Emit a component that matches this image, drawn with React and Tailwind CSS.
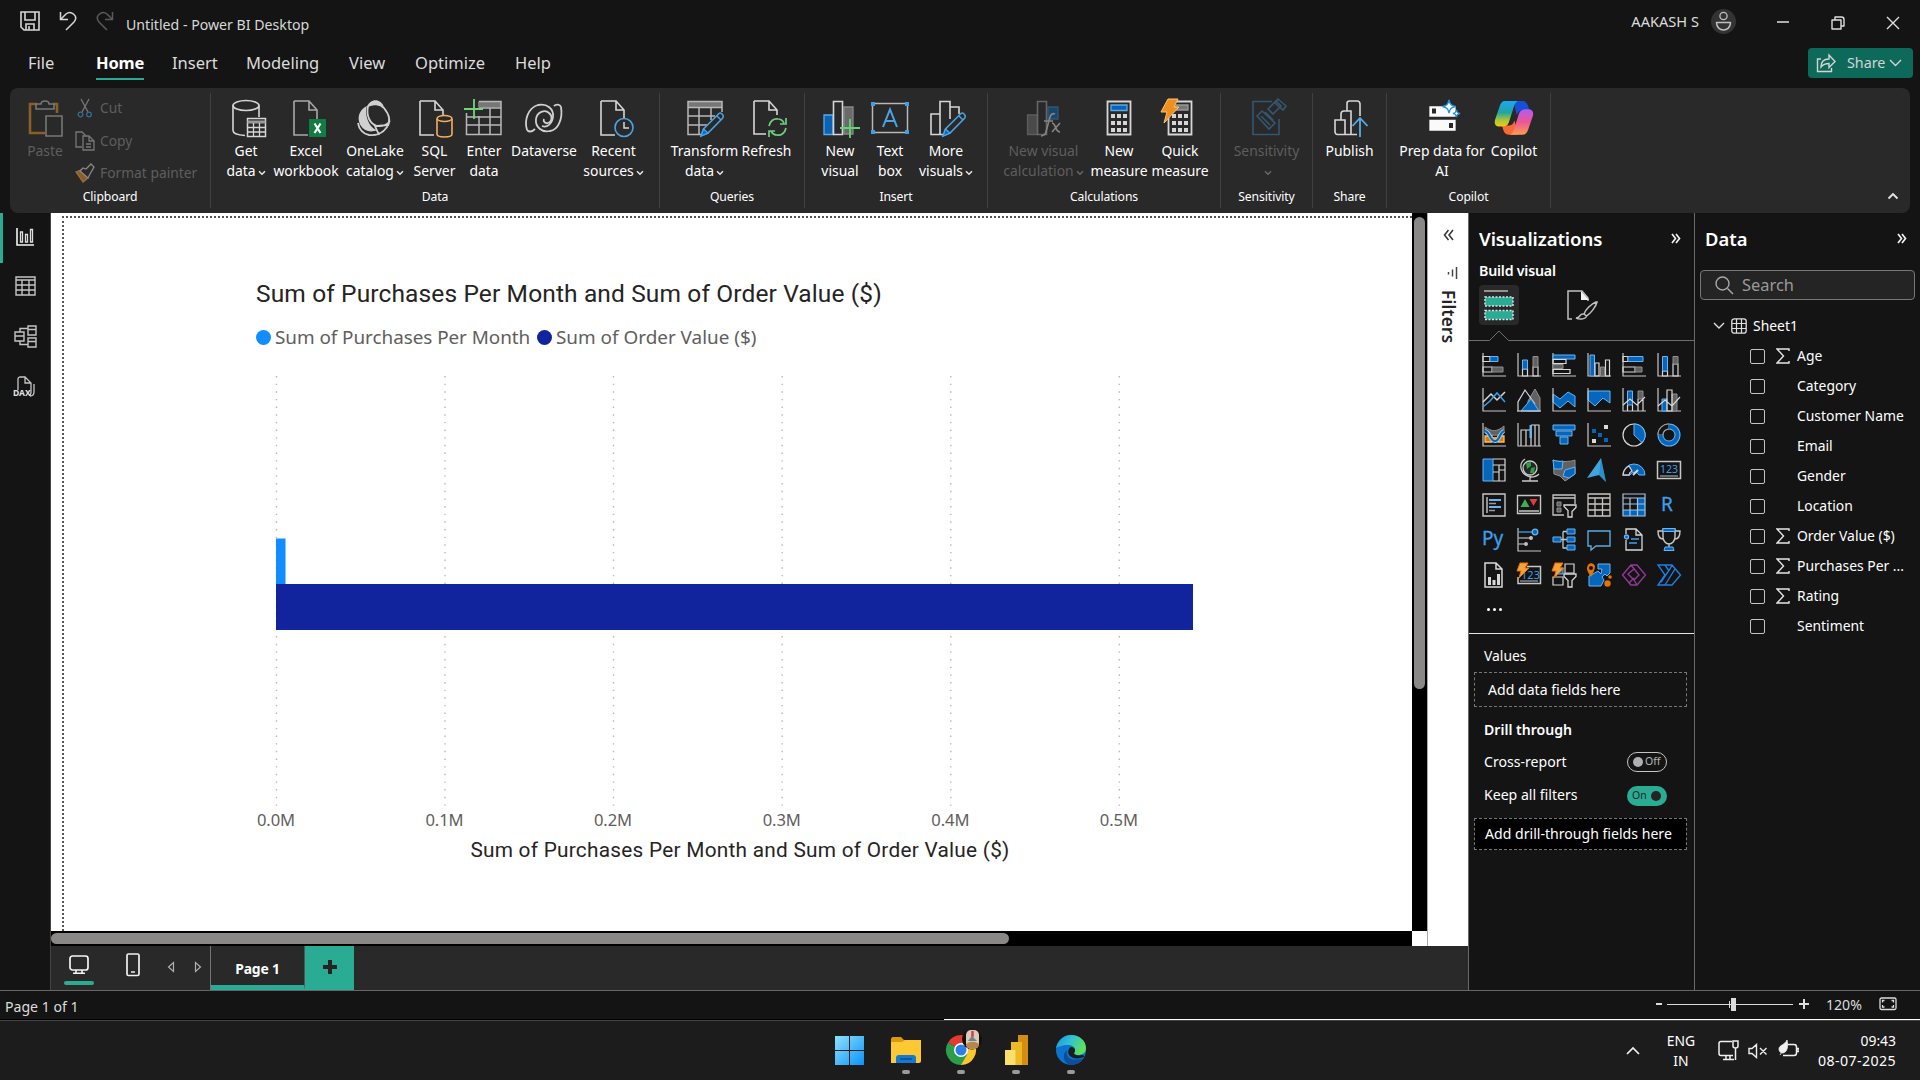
import React from "react";

const BLUE = "#0467bd";
const SKY = "#6cb2ee";
const G = "#c8c6c4";
const D = "#616161";

/* ---------- shared small pieces ---------- */

const Svg = ({ w = 24, h = w, vb, className = "", children }) => (
  <svg
    width={w}
    height={h}
    viewBox={vb || `0 0 ${w} ${h}`}
    fill="none"
    stroke={G}
    strokeWidth="1.3"
    className={`block shrink-0 ${className}`}
  >
    {children}
  </svg>
);

const Caret = ({ dim }) => (
  <svg width="8" height="6" viewBox="0 0 8 6" fill="none" stroke={dim ? "#6a6a6a" : "#e8e8e8"} strokeWidth="1.5" className="mt-1 ml-0.5 inline-block shrink-0">
    <path d="M1 1.2l3 3 3-3" />
  </svg>
);

const Doc = ({ c = "#d6d6d6" }) => (
  <path d="M5 2h15l8 9v9M5 2v34h14M20 2v9h8" stroke={c} strokeWidth="1.6" />
);

const Pencil = ({ x = 0, y = 0 }) => (
  <g transform={`translate(${x} ${y})`}>
    <path d="M2 24l2.500-7L20 1.500c1.500-1.500 5.500 1.500 3.800 4.500L9 21z" fill="#292929" stroke="#4da3e2" strokeWidth="1.5" />
    <path d="M2 24l2.500-7 4.500 4z" fill="#0a6cc4" stroke="#4da3e2" />
    <path d="M18 4l4 4" stroke="#4da3e2" strokeWidth="1.4" />
  </g>
);

/* ---------- ribbon icons, 38 x 38 ---------- */

const ribbonIcons = {
  getData: (
    <>
      <ellipse cx="16" cy="6.500" rx="13" ry="5" stroke="#d6d6d6" strokeWidth="1.6" />
      <path d="M3 6.500v25c0 2.500 5 4.500 12 5M29 6.500V18" stroke="#d6d6d6" strokeWidth="1.6" />
      <rect x="17.500" y="19.500" width="18" height="18" fill="#292929" stroke="#d6d6d6" strokeWidth="1.5" />
      <path d="M17.500 23h18" stroke="#9a9a9a" strokeWidth="3" />
      <path d="M17.500 28.500h18M17.500 33h18M23.500 24v13M29.500 24v13" stroke="#d6d6d6" strokeWidth="1.3" />
    </>
  ),
  excel: (
    <>
      <Doc c="#a8a8a8" />
      <rect x="20" y="20" width="17" height="18" fill="#107c41" stroke="none" />
      <path d="M25.500 24.500l6 9.500M31.500 24.500l-6 9.500" stroke="#fff" strokeWidth="2.200" />
    </>
  ),
  oneLake: (
    <>
      <path d="M5 27C-1 17 6 9 11 7c-3 8 2 22 10 24-6 3-13 1-16-4z" fill="#d0d0d0" stroke="none" />
      <path d="M11 8c3-9 14-9 17 0-6-3-11-3-17 0z" fill="#d0d0d0" stroke="none" />
      <path d="M12 7c5-3 12-2 16 2 4 5 8 12 3 19-4 6-11 9-18 8-6-1-10-6-11-12M12 7c-2 10 2 18 9 20 6 1 11-2 13-5M23 36l-4-9 14-1" stroke="#d0d0d0" strokeWidth="1.8" />
    </>
  ),
  sql: (
    <>
      <path d="M5 2h15l8 9v6M5 2v34h14M20 2v9h8" stroke="#d6d6d6" strokeWidth="1.6" transform="translate(-1 0)" />
      <path d="M21 20v15c0 4 15 4 15 0V20" fill="#292929" stroke="#f0b060" strokeWidth="1.6" />
      <ellipse cx="28.500" cy="19.500" rx="7.500" ry="3" fill="#292929" stroke="#f0b060" strokeWidth="1.6" />
    </>
  ),
  enter: (
    <>
      <path d="M13 2.500h23v6H13z" fill="#777" stroke="none" />
      <path d="M1.500 14v21.500H36V2.500H14M1.500 26h34.500M1.500 18h34.500M14 17v18.500M25 9v26.500M14 9h22" stroke="#b8b8b8" strokeWidth="1.5" />
      <path d="M9 0v20M-1 10h19" stroke="#6fd67c" strokeWidth="1.8" />
    </>
  ),
  dataverse: (
    <g stroke="#d0d0d0" strokeWidth="1.8">
      <path d="M36 8c2 12-3 23-11 24-8 2-15-4-14-12 1-7 9-10 13-6 4 3 3 9-1 10-3 1-5-2-4-4" />
      <path d="M2 31C-1 21 3 9 13 6c9-2 16 4 15 12-1 7-6 11-11 9" />
      <path d="M36 8c-1-3-5-3-7-1M2 31c2 2 5 2 8-1" />
    </g>
  ),
  recent: (
    <>
      <Doc />
      <circle cx="28" cy="28.500" r="9" fill="#292929" stroke="#4da3e2" strokeWidth="1.6" />
      <path d="M28 23v6h5" stroke="#d6d6d6" strokeWidth="1.5" />
    </>
  ),
  transform: (
    <>
      <path d="M1 3h34v5H1z" fill="#777" stroke="none" />
      <path d="M35 13V2.500H1v33h15M1 8.500h34M1 17h27M1 26h19M12 9v26M24 9v12" stroke="#b8b8b8" strokeWidth="1.5" />
      <Pencil x="12" y="13" />
    </>
  ),
  refresh: (
    <>
      <path d="M5 2h15l8 9v5M5 2v33h12M20 2v9h8" stroke="#d6d6d6" strokeWidth="1.6" />
      <path d="M20 27c1-5 5-8 9-7 3 0 5 2 6 4M37 19v6h-6M37 29c-1 5-5 8-9 7-3 0-5-2-6-4M20 38v-6h6" stroke="#6fcf7f" strokeWidth="1.7" />
    </>
  ),
  newVisual: (
    <>
      <path d="M22 8h9v27h-9z" fill="#6a6a6a" stroke="#888" />
      <path d="M2 16h9v19.500H2z" fill="#0a63b5" stroke="#5aaae8" />
      <path d="M11.500 2.500h9v33h-9z" fill="#292929" stroke="#d6d6d6" strokeWidth="1.6" />
      <path d="M28 20v19M18 29h20" stroke="#5fd873" strokeWidth="1.8" />
    </>
  ),
  textBox: (
    <>
      <path d="M1.500 4.500h35v29h-35z" stroke="#b8b8b8" strokeWidth="1.5" />
      <path d="M0 3h4v4H0zM34 3h4v4h-4zM0 31h4v4H0zM34 31h4v4h-4z" fill="#3f9ee8" stroke="none" />
      <path d="M12 28l7-17.500L26 28M14.500 22h9" stroke="#4da3e2" strokeWidth="2" />
    </>
  ),
  moreVisuals: (
    <>
      <path d="M2 15h9v20.500H2zM11 35.500v-33h10V20M21 8h9v7M11 35.500h4" stroke="#d6d6d6" strokeWidth="1.6" />
      <Pencil x="12" y="13" />
    </>
  ),
  visualCalc: (
    <>
      <path d="M22 8h10v12H22z" fill="#1d4666" stroke="#2b587a" />
      <path d="M1.500 16h10v19.500h-10z" fill="#4a4a4a" stroke="#5c5c5c" />
      <path d="M11.500 2.500h9v33h-9z" stroke="#666" strokeWidth="1.6" />
      <path d="M15 37c4 0 5-3 6-8l3-11c1-3 3-4 5-3M18 22h9M26 24c4 0 3 9 8 9M34 24l-8 9" stroke="#858585" strokeWidth="1.6" />
    </>
  ),
  calc: (
    <>
      <path d="M7.500 2.500h23v33h-23z" stroke="#d6d6d6" strokeWidth="1.8" />
      <path d="M11 6h16v5.500H11z" fill="#0a63b5" stroke="#5aaae8" />
      <path d="M11 17h16M11 24h16M11 31h16" stroke="#d6d6d6" strokeWidth="4" strokeDasharray="4 2" />
    </>
  ),
  quick: (
    <>
      <path d="M7.500 18v17.500h23v-33H16" stroke="#d6d6d6" strokeWidth="1.8" />
      <path d="M15 6h12v5H14z" fill="#777" stroke="#999" />
      <path d="M11 17h16M11 24h16M11 31h16" stroke="#d6d6d6" strokeWidth="4" strokeDasharray="4 2" />
      <path d="M7 0h10l-4 8h5L3 24l3-11H0z" fill="#ef8f1f" stroke="#f9c97a" strokeWidth="1" />
    </>
  ),
  sensitivity: (
    <g stroke="#34566f" strokeWidth="1.6">
      <path d="M21 2.500H2v33h26V20" />
      <path d="M6 17l5-5 13 12-6 6zM10 17l9 9M17 10l8-8 5 5-8 8zM14 13l8 8M27 0l8 7-3 4-8-7z" />
    </g>
  ),
  publish: (
    <>
      <path d="M2 21h10v14.500H4.500C3 35.500 2 34 2 33zM8 21v-6c0-2 1-3 3-3h7v23.500M14 12V4.500C14 3 15 2 16.500 2H24c2 0 3 1 3 3v12M12 35.500h12" stroke="#d6d6d6" strokeWidth="1.6" />
      <path d="M27 38V20M19.500 27l7.500-8 7.500 8" stroke="#5aaae8" strokeWidth="1.8" />
    </>
  ),
  prep: (
    <>
      <path d="M5 8h25v9H5zM5 21.500h25V31H5z" fill="#fafafa" stroke="#fafafa" />
      <path d="M7 9.500h4v5H7zM24 24h4v5h-4z" fill="#292929" stroke="none" />
      <path d="M24 1c1 4.500 2 5.500 6.500 6.500C26 8.500 25 9.500 24 14c-1-4.500-2-5.500-6.500-6.500C22 6.500 23 5.500 24 1z" fill="#fff" stroke="#2191dd" strokeWidth="1.4" />
      <path d="M31.500 11c.6 2.500 1 3 3.500 3.500-2.500.6-3 1-3.500 3.500-.6-2.500-1-3-3.500-3.500 2.500-.6 3-1 3.500-3.500z" fill="#fff" stroke="#2191dd" />
    </>
  ),
  copilot: (
    <>
      <defs>
        <linearGradient id="cpA" x1="0" y1="0" x2="0" y2="1">
          <stop offset="0" stopColor="#1ba7f5" />
          <stop offset=".45" stopColor="#22a5a0" />
          <stop offset=".75" stopColor="#a8c63c" />
          <stop offset="1" stopColor="#f4c814" />
        </linearGradient>
        <linearGradient id="cpB" x1="0" y1="0" x2="0" y2="1">
          <stop offset="0" stopColor="#b05cf5" />
          <stop offset=".5" stopColor="#ee5694" />
          <stop offset="1" stopColor="#fb9c52" />
        </linearGradient>
      </defs>
      <g transform="translate(-1 0) scale(1.14 1.02)">
        <path d="M17 2h8c3 0 4 2 5 5l1 4h-5c-4 0-5 2-6 5z" fill="#1550d6" stroke="none" />
        <path d="M21 35h-8c-3 0-4-2-5-5l-1-4h5c4 0 5-2 6-5z" fill="#f76a38" stroke="none" />
        <path d="M10 2h11c-2 1-3 3-4 7l-4 14c-1 3-3 4-6 4H5c-4 0-5-3-4-7l4-13c1-3 2-5 5-5z" fill="url(#cpA)" stroke="none" />
        <path d="M28 35H17c2-1 3-3 4-7l4-14c1-3 3-4 6-4h2c4 0 5 3 4 7l-4 13c-1 3-2 5-5 5z" fill="url(#cpB)" stroke="none" transform="translate(-3 0)" />
      </g>
    </>
  ),
};

function RibbonItem({ w, icon, l1, l2, caret, dim, shift = "" }) {
  return (
    <div className={`flex flex-col items-center ${w} ${dim ? "text-[#5e5e5e]" : "text-white"}`}>
      <Svg w={38} className={`overflow-visible ${shift}`}>{ribbonIcons[icon]}</Svg>
      <div className="mt-1 text-center text-[13.900px] leading-5 whitespace-nowrap">
        <div>{l1}</div>
        <div className="flex h-5 items-center justify-center">
          {l2}
          {caret && <Caret dim={dim} />}
        </div>
      </div>
    </div>
  );
}

function RibbonGroup({ w, label, children, pad = "" }) {
  return (
    <div className={`flex h-[115px] flex-col border-r border-[#404040] ${w}`}>
      <div className={`flex h-[95px] pt-1.5 ${pad}`}>{children}</div>
      <div className="text-center text-[12.200px] leading-[17px] tracking-[-0.1px] text-white">{label}</div>
    </div>
  );
}

function Ribbon() {
  return (
    <div className="relative z-10 mx-[10px] flex h-[125px] rounded-lg bg-[#292929] pt-[5px]">
      <RibbonGroup w="w-[201px]" label="Clipboard">
        <div className="flex w-full text-[13.800px] text-[#5e5e5e]">
          <div className="ml-4 flex w-[38px] flex-col items-center">
            <Svg w={38}>
              <path d="M11 5H4v29h15" stroke="#8a5f26" strokeWidth="2.600" />
              <path d="M27 5h4v9" stroke="#8a5f26" strokeWidth="2.600" />
              <path d="M10 10V5h5c0-4 8-4 8 0h5v5z" stroke="#777" strokeWidth="1.6" />
              <path d="M20 17h16v20H20z" fill="#292929" stroke="#777" strokeWidth="1.6" />
            </Svg>
            <div className="mt-1 text-[13.900px] leading-5">Paste</div>
          </div>
          <div className="-mt-px ml-[11px] flex flex-col">
            <div className="flex h-[20px] items-center gap-[5px]">
              <Svg w={20}>
                <path d="M6 1l7 13M14 1L7 14" stroke="#777" />
                <circle cx="5.500" cy="16.500" r="2.300" stroke="#3a6a8c" />
                <circle cx="14" cy="16.500" r="2.300" stroke="#3a6a8c" />
              </Svg>
              Cut
            </div>
            <div className="mt-[13px] flex h-[20px] items-center gap-[5px]">
              <Svg w={20}>
                <path d="M7 16H1V1h6l4 4M12 4v0" stroke="#777" />
                <path d="M8 5h6l5 5v9H8zM14 5v5h5M11 13h5M11 16h5" stroke="#777" />
              </Svg>
              Copy
            </div>
            <div className="mt-3 flex h-[20px] items-center gap-[5px] whitespace-nowrap">
              <Svg w={20}>
                <path d="M1 9l7 10 5-4-7-8z" fill="#8a5f26" stroke="#99713a" />
                <path d="M5 8l8 7 2-4 4-7-3-3-5 5-3-1z" fill="#292929" stroke="#888" />
              </Svg>
              Format painter
            </div>
          </div>
        </div>
      </RibbonGroup>
      <RibbonGroup w="w-[449px]" label="Data" pad="pl-3">
        <RibbonItem w="w-[46px]" icon="getData" l1="Get" l2="data" caret shift="ml-[5px]" />
        <RibbonItem w="w-[74px]" icon="excel" l1="Excel" l2="workbook" shift="ml-[3px]" />
        <RibbonItem w="w-[64px]" icon="oneLake" l1="OneLake" l2="catalog" caret />
        <RibbonItem w="w-[55px]" icon="sql" l1="SQL" l2="Server" shift="ml-px" />
        <RibbonItem w="w-[44px]" icon="enter" l1="Enter" l2="data" />
        <RibbonItem w="w-[76px]" icon="dataverse" l1="Dataverse" />
        <RibbonItem w="w-[63px]" icon="recent" l1="Recent" l2="sources" caret shift="ml-[3px]" />
      </RibbonGroup>
      <RibbonGroup w="w-[145px]" label="Queries" pad="pl-[11px]">
        <RibbonItem w="w-[67px]" icon="transform" l1="Transform" l2="data" caret shift="ml-0.5" />
        <RibbonItem w="w-[57px]" icon="refresh" l1="Refresh" shift="ml-[3px]" />
      </RibbonGroup>
      <RibbonGroup w="w-[183px]" label="Insert" pad="pl-[10px]">
        <RibbonItem w="w-[50px]" icon="newVisual" l1="New" l2="visual" shift="ml-0.5" />
        <RibbonItem w="w-[50px]" icon="textBox" l1="Text" l2="box" />
        <RibbonItem w="w-[62px]" icon="moreVisuals" l1="More" l2="visuals" caret shift="ml-[3px]" />
      </RibbonGroup>
      <RibbonGroup w="w-[233px]" label="Calculations" pad="pl-3">
        <RibbonItem w="w-[87px]" icon="visualCalc" l1="New visual" l2="calculation" caret dim shift="ml-0.5" />
        <RibbonItem w="w-[64px]" icon="calc" l1="New" l2="measure" shift="mr-px" />
        <RibbonItem w="w-[58px]" icon="quick" l1="Quick" l2="measure" shift="mr-px" />
      </RibbonGroup>
      <RibbonGroup w="w-[92px]" label="Sensitivity">
        <RibbonItem w="w-full" icon="sensitivity" l1="Sensitivity" l2="" caret dim shift="ml-[6px]" />
      </RibbonGroup>
      <RibbonGroup w="w-[74px]" label="Share">
        <RibbonItem w="w-full" icon="publish" l1="Publish" shift="ml-[5px]" />
      </RibbonGroup>
      <RibbonGroup w="w-[164px]" label="Copilot" pad="pl-2">
        <RibbonItem w="w-[94px]" icon="prep" l1="Prep data for" l2="AI" shift="ml-[3px]" />
        <RibbonItem w="w-[50px]" icon="copilot" l1="Copilot" />
      </RibbonGroup>
      <div className="flex flex-1 items-end justify-end pr-[11px] pb-[13px]">
        <Svg w={12} h={8}>
          <path d="M1.500 6.500L6 2l4.500 4.500" stroke="#e6e6e6" strokeWidth="1.8" />
        </Svg>
      </div>
    </div>
  );
}

/* ---------- title bar and tabs ---------- */

const tabs = [
  ["File", "w-[68px]"],
  ["Home", "w-[76px]"],
  ["Insert", "w-[74px]"],
  ["Modeling", "w-[103px]"],
  ["View", "w-[66px]"],
  ["Optimize", "w-[100px]"],
  ["Help", "w-[60px]"],
];

function Header() {
  return (
    <div className="flex h-[88px] justify-between">
      <div className="flex flex-col">
        <div className="flex h-11 items-center pl-5">
          <Svg w={20} className="mb-0.5">
            <path d="M1 1h18v18H4l-3-3zM5 1v8h10V1M6 19v-6h8v6M9 15v4" stroke="#d6d6d6" strokeWidth="1.6" />
          </Svg>
          <Svg w={18} h={20} className="mb-0.5 ml-[19px]">
            <path d="M1.500 1v7.500H9M1.500 8.500L7 3c5-4 13 2 8 8l-8 8" stroke="#d6d6d6" strokeWidth="1.5" />
          </Svg>
          <Svg w={18} h={20} className="mb-0.5 ml-[19px]">
            <path d="M16.500 1v7.500H9M16.500 8.500L11 3C6-1 -2 5 3 11l8 8" stroke="#5a5a5a" strokeWidth="1.5" />
          </Svg>
          <span className="mt-[5px] ml-3 text-[14.150px] text-[#d8d8d8]">Untitled - Power BI Desktop</span>
        </div>
        <div className="flex h-11 pl-7 text-[16.500px] text-[#dcdcdc]">
          {tabs.map(([t, w]) => (
            <div key={t} className={w}>
              <div className={`inline-block h-[36px] pt-[5px] leading-[27px] ${t === "Home" ? "border-b-2 border-[#2aac94] font-bold text-white tracking-[-0.2px]" : ""}`}>
                {t}
              </div>
            </div>
          ))}
        </div>
      </div>
      <div className="flex flex-col items-end">
        <div className="flex h-11 items-center pr-5">
          <span className="mb-px text-[14.600px] text-[#dcdcdc]">AAKASH S</span>
          <div className="mb-0.5 ml-3 flex size-[25px] items-center justify-center rounded-full bg-[#333]">
            <Svg w={17} h={20}>
              <circle cx="8.500" cy="5" r="3.600" stroke="#c0c0c0" />
              <path d="M1.500 11.500h14c0 10-14 10-14 0z" stroke="#c0c0c0" strokeLinejoin="round" strokeWidth="1.5" />
            </Svg>
          </div>
          <Svg w={14} className="ml-10">
            <path d="M1 7h12" stroke="#e0e0e0" strokeWidth="1.5" />
          </Svg>
          <Svg w={14} className="mt-0.5 ml-[41px]">
            <path d="M1 4h9v9H1zM4 3.500V1h6.500C12 1 13 2 13 3.500V10h-2.500" stroke="#e0e0e0" strokeLinejoin="round" strokeWidth="1.4" />
          </Svg>
          <Svg w={14} className="mt-0.5 ml-[41px]">
            <path d="M1 1l12 12M13 1L1 13" stroke="#e0e0e0" strokeWidth="1.4" />
          </Svg>
        </div>
        <div className="mt-1 mr-[7px] flex h-[30px] w-[105px] items-center rounded bg-[#0d6a5a] pl-2 text-[14.300px] text-[#d4d4d4]">
          <Svg w={20}>
            <path d="M5 6H1.500v12.500h14V15" stroke="#d4d4d4" strokeWidth="1.4" />
            <path d="M5 14c0-6 4-8 8-8V2l6 6.500-6 6v-4c-4 0-6 1-8 3.500z" stroke="#d4d4d4" strokeWidth="1.4" />
          </Svg>
          <span className="ml-[11px]">Share</span>
          <Svg w={13} h={8} className="ml-1">
            <path d="M1 1l5.500 5.500L12 1" stroke="#d4d4d4" strokeWidth="1.4" />
          </Svg>
        </div>
      </div>
    </div>
  );
}

/* ---------- left rail ---------- */

function Rail() {
  return (
    <div className="flex w-[51px] flex-col border-r border-[#444] bg-[#141414]">
      <div className="flex h-[50px] items-center border-l-[3px] border-[#2aac94] pl-[13px]">
        <Svg w={18} className="mb-0.5">
          <path d="M1 0v17h17" stroke="#f4f4f4" strokeWidth="1.6" />
          <path d="M4.500 4h2v10h-2zM9.500 6.500h2V14h-2zM14.500 1.500h2V14h-2z" stroke="#dedede" strokeWidth="1.3" />
        </Svg>
      </div>
      <div className="mt-[3px] flex h-10 items-center pl-[15px]">
        <Svg w={21} h={20}>
          <path d="M1 1h19v18H1zM1 4h19M1 9h19M1 14h19M7 4v15M14 4v15" stroke="#c4c4c4" strokeWidth="1.4" />
        </Svg>
      </div>
      <div className="mt-[10px] flex h-10 items-center pl-[14px]">
        <Svg w={23}>
          <path d="M1 7h9v9H1zM1 11h9M14 1h8v9h-8zM14 4.500h8M14 13h8v9h-8zM14 16.500h8M6 7V3.500h8M6 16v3.500h8" stroke="#c4c4c4" strokeWidth="1.4" />
        </Svg>
      </div>
      <div className="mt-[11px] flex h-10 flex-col pl-[13px]">
        <Svg w={22} h={21} className="mt-[9px]">
          <path d="M5 14V3c0-1 1-2 2-2h5l6 6v9c0 2-1 3-2 3M12 1v6h6M21 8v8c0 3-2 4-4 4" stroke="#c4c4c4" strokeWidth="1.3" />
          <text x="0" y="20" fontSize="8.500" fontWeight="700" fill="#e0e0e0" stroke="none" className="font-['Noto_Sans',sans-serif]">DAX</text>
        </Svg>
      </div>
    </div>
  );
}

/* ---------- report canvas ---------- */

const ticks = [
  ["0.0M", 20],
  ["0.1M", 188.500],
  ["0.2M", 357],
  ["0.3M", 525.700],
  ["0.4M", 694.300],
  ["0.5M", 862.800],
];

function Chart() {
  return (
    <div className="flex w-[970px] flex-col pt-[60px] pl-[192px]">
      <div className="font-[Roboto,sans-serif] text-[24.500px] leading-8 tracking-[0.130px] whitespace-nowrap text-[#252423]">
        Sum of Purchases Per Month and Sum of Order Value ($)
      </div>
      <div className="mt-[13px] flex h-7 items-center text-[18.900px] whitespace-nowrap text-[#605e5c]">
        <span className="size-[15px] rounded-full bg-[#118dff]" />
        <span className="ml-1 w-[262px] tracking-[-0.050px]">Sum of Purchases Per Month</span>
        <span className="size-[15px] rounded-full bg-[#12239e]" />
        <span className="ml-1">Sum of Order Value ($)</span>
      </div>
      <svg width="960" height="490" viewBox="0 0 960 490" className="mt-[24px] block">
        {ticks.map(([t, x]) => (
          <g key={t}>
            <path d={`M${x + 0.500} 1v430`} stroke="#b8b8b8" strokeWidth="1.4" strokeDasharray="1.400 6.250" />
            <text x={x} y="450.500" textAnchor="middle" fontSize="16.600" letterSpacing="-0.1" fill="#605e5c" className="font-['Noto_Sans',sans-serif]">{t}</text>
          </g>
        ))}
        <rect x="20" y="163.500" width="9.500" height="46" fill="#118dff" />
        <rect x="20" y="209" width="917" height="46" fill="#12239e" />
        <text x="484" y="481.500" textAnchor="middle" fontSize="20.800" letterSpacing="0.260" fill="#252423" className="font-[Roboto,sans-serif]">
          Sum of Purchases Per Month and Sum of Order Value ($)
        </text>
      </svg>
    </div>
  );
}

function Canvas() {
  return (
    <div className="flex h-[733px]">
      <div className="flex w-[1361px] flex-col">
        <div className="h-[718px] bg-white pt-[3px] pl-[11px]">
          <div className="h-[715px] w-[1350px] overflow-hidden border-t-2 border-l-2 border-dotted border-[#555] bg-white">
            <Chart />
          </div>
        </div>
        <div className="flex h-[15px] items-center bg-black">
          <div className="h-[11px] w-[958px] rounded-full bg-[#8a8886]" />
        </div>
      </div>
      <div className="flex w-[15px] flex-col">
        <div className="flex h-[718px] justify-center bg-black pt-1">
          <div className="h-[472px] w-[11px] rounded-full bg-[#8a8886]" />
        </div>
        <div className="h-[15px] bg-white" />
      </div>
      <div className="flex w-[41px] flex-col items-center border-l border-[#aaa] bg-white text-[#252423]">
        <Svg w={11} h={12} className="mt-4">
          <path d="M5.500 1L1.500 6l4 5M10 1L6 6l4 5" stroke="#333" strokeWidth="1.5" />
        </Svg>
        <Svg w={11} h={12} className="mt-[26px] ml-2">
          <path d="M9.500 0v12M5.500 2.500v7M1.500 5v2.500" stroke="#444" strokeWidth="1.5" />
        </Svg>
        <div className="mt-[11px] text-[17.200px] leading-5 font-semibold tracking-[0.2px] [writing-mode:vertical-rl]">Filters</div>
      </div>
    </div>
  );
}

function PageTabs() {
  return (
    <div className="flex h-11 bg-[#292929]">
      <div className="flex w-[160px] border-r border-[#767676]">
        <div className="ml-[13px] flex w-[30px] flex-col items-center pt-[9px]">
          <Svg w={22} h={20}>
            <rect x="2" y="1" width="18" height="14" rx="2.500" stroke="#f4f4f4" strokeWidth="1.7" />
            <path d="M8 15v3M14 15v3M5 18.200h12" stroke="#f4f4f4" strokeWidth="1.6" />
          </Svg>
          <div className="mt-1.5 h-1 w-[30px] rounded-full bg-[#2aac94]" />
        </div>
        <Svg w={14} h={24} className="mt-[7px] ml-8">
          <rect x="1" y="1" width="12" height="21.500" rx="1.500" stroke="#f0f0f0" strokeWidth="1.7" />
          <path d="M5 19h4" stroke="#f0f0f0" strokeWidth="1.500" />
        </Svg>
        <Svg w={8} h={12} className="mt-[15px] ml-[27px]">
          <path d="M6.500 1.500v9L1.500 6z" stroke="#b0b0b0" strokeWidth="1.200" />
        </Svg>
        <Svg w={8} h={12} className="mt-[15px] ml-[19px]">
          <path d="M1.500 1.500v9l5-4.500z" stroke="#b0b0b0" strokeWidth="1.200" />
        </Svg>
      </div>
      <div className="flex w-[94px] items-center justify-center border-r border-b-[5px] border-r-[#555] border-b-[#2aac94] pt-2 text-[13.900px] font-bold tracking-[-0.2px] text-white">
        Page 1
      </div>
      <div className="flex w-[49px] items-center justify-center bg-[#2aac94]">
        <Svg w={14} className="mb-[3px]">
          <path d="M7 0v14M0 7h14" stroke="#252423" strokeWidth="4" />
        </Svg>
      </div>
    </div>
  );
}

/* ---------- visual gallery icons, 24 x 24 ---------- */

const Axes = () => <path d="M1 0v23h23" stroke={G} strokeWidth="1.2" />;
const B = { fill: BLUE, stroke: SKY, strokeWidth: 1 };
const Dk = { fill: D, stroke: "#8f8f8f", strokeWidth: 1 };
const Wt = { fill: "none", stroke: "#d8d8d8", strokeWidth: 1.2 };
const Bolt = () => <path d="M3 0h8L8 5h4L2 15l2-7H0z" fill="#f3a33a" stroke="#e86f00" strokeWidth="1" />;
const Funnel = ({ x = 12, y = 11 }) => (
  <path d={`M${x} ${y}h12v2.500l-4 4V24h-4v-6.500l-4-4z`} fill="#141414" stroke="#d8d8d8" strokeWidth="1.300" />
);

const gallery = [
  <><Axes /><path {...Wt} d="M1 3.500h7v5H1zM1 14h9v5H1z" /><path {...B} d="M8 3.500h8v5H8z" /><path {...Dk} d="M10 14h11v5H10z" /></>,
  <><Axes /><path {...Wt} d="M5.500 16h5v7h-5zM16 14h5v9h-5z" /><path {...B} d="M5.500 7h5v9h-5z" /><path {...Dk} d="M16 3.500h5V14h-5z" /></>,
  <><Axes /><path {...B} d="M1 2h22v4H1z" /><path {...Wt} d="M1 6.500h13v4H1zM1 16.500h17v4H1z" /><path {...Dk} d="M1 11.500h10v4H1z" /></>,
  <><Axes /><path {...B} d="M3 2h4.500v21H3z" /><path {...Wt} d="M8 10h4v13H8zM18.500 7h4v16h-4z" /><path {...Dk} d="M13.500 14h4v9h-4z" /></>,
  <><Axes /><path {...Wt} d="M1 3.500h5v5H1zM1 14h12v5H1z" /><path {...B} d="M6 3.500h15v5H6z" /><path {...Dk} d="M13 14h7v5h-7z" /></>,
  <><Axes /><path {...Wt} d="M5.500 18h5v5h-5zM16 11h5v12h-5z" /><path {...B} d="M5.500 3.500h5V18h-5z" /><path {...Dk} d="M16 3.500h5V11h-5z" /></>,
  <><Axes /><path d="M1 14l8-8 6 6 8-8" {...Wt} strokeWidth="1.500" /><path d="M1 19l7-6 7-8 8 9" stroke="#3f9ee8" strokeWidth="1.500" /></>,
  <><path d="M11 13l7-12 5 9v13H11z" {...Dk} /><path d="M1 23V14L8 2l10 14" {...Wt} /><path d="M4 23L14 11l8 12z" {...B} /><path d="M0 23h24" stroke={G} /></>,
  <><path d="M1 6l7 5 8-7 7 4v11l-7-6-8 7-7-6z" {...B} /><Axes /></>,
  <><path d="M1 3h22v12l-7-5-8 8-7-6z" {...B} /><Axes /></>,
  <><Axes /><path {...B} d="M5.500 3h5v14h-5z" /><path {...Dk} d="M16 3h5v8h-5z" /><path {...Wt} d="M5.500 17v6M10.500 17v6M16 11v12M21 11v12M1 17l7-6 7 6 8-8" /></>,
  <><Axes /><path {...B} d="M5 11h5v12H5z" /><path {...Dk} d="M15 6h5v17h-5z" /><path {...Wt} d="M10 2h5v21h-5zM1 18l7-6 7 6 8-9" /></>,
  <><path d="M3 4c7 5 12 5 19-1v7c-6 3-13 3-19 0z" {...Dk} /><path d="M3 13h7v6H3zM16 13h6v6h-6z" fill="#e87400" stroke="#f9c060" /><path d="M3 8c5 1 5 10 10 10s4-8 9-10" stroke="#9cd0f8" strokeWidth="4" /><path d="M3 8c5 1 5 10 10 10s4-8 9-10" stroke={BLUE} strokeWidth="2.200" /><path d="M9 14h7l-3.500 3z" fill="#f3a33a" stroke="none" /><Axes /></>,
  <><Axes /><path {...Wt} d="M4 23V7h5v16M9 7h5v7M14 4v19M18 2v21M14 2h8v21" /><path d="M12.500 2h2.500v13h-2.500z" fill={SKY} stroke="none" /></>,
  <><path {...B} d="M1 2h22v5H1zM4 8h16v5H4zM8 14h8v7H8z" /></>,
  <><Axes /><path fill={BLUE} stroke="none" d="M5 6h4v4H5zM11 10h4v4h-4zM17 15h4v4h-4z" /><path fill="#d8d8d8" stroke="none" d="M17 2h4v4h-4zM5 16h4v4H5z" /></>,
  <><circle cx="12" cy="12" r="11" {...Wt} /><path d="M12 1a11 11 0 0 1 8 18.600L12 12z" {...B} /></>,
  <><circle cx="12" cy="12" r="8.500" stroke={SKY} strokeWidth="6" /><circle cx="12" cy="12" r="8.500" stroke={BLUE} strokeWidth="4" /><path d="M12 3.500A8.500 8.500 0 0 0 3.500 12" stroke="#9a9a9a" strokeWidth="6" /><path d="M11.500 3.500A8 8 0 0 0 3.500 11.500" stroke="#141414" strokeWidth="3.800" /></>,
  <><path {...B} d="M1 1h10v22H1z" /><path {...Wt} d="M11 1h12v22H11M11 7h12M17 7v16M11 14h6M17 12h6M17 12v-5" /></>,
  <><circle cx="13" cy="10" r="7" stroke="#c8c8c8" fill="#262626" /><path d="M9 5l5-1 0 4-4 3zM14 10l4-1-1 6-4 0z" fill="#2e9e48" stroke="none" /><path d="M8 1c-7 5-5 16 6 18 4 0 6-1 8-3M13 19v4M5 23h16" stroke="#c8c8c8" /></>,
  <><path d="M1 2c4 2 18 2 22 0v14l-7 5-3 2-5-5-6-2c-1-4 1-9-1-14z" {...Dk} /><path d="M1 2c3 1 6 2 10 1l-1 8-8 0zM13 12l10-3v7l-6 4-6-2z" {...B} /></>,
  <><path d="M14 0l5 24-7-7-12 3z" fill="#41a5dc" stroke="none" /><path d="M12 17l7 7L14 0z" fill="#1579c0" stroke="none" opacity=".5" /></>,
  <><path d="M1 17a11 11 0 0 1 22 0h-6a5 5 0 0 0-9 0z" {...B} /><path d="M1 17a11 11 0 0 1 6-9l3 5a5 5 0 0 0-3 4z" fill="#141414" stroke="#d0d0d0" strokeWidth="1.300" /><path d="M11 17l5-5" stroke="#d8d8d8" strokeWidth="2" /></>,
  <><path d="M0.500 3.500h23v17h-23z" stroke={G} strokeWidth="1.500" /><text x="12" y="15" fontSize="10.500" textAnchor="middle" fill="#3f9ee8" stroke="none">123</text><path d="M3 18h18" stroke="#999" /></>,
  <><path d="M1 1h22v22H1zM5 4v16" stroke={G} strokeWidth="1.400" /><path d="M7 7h12M7 14h12" stroke={SKY} strokeWidth="2" /><path d="M7 10.500h7M7 17.500h6" stroke="#999" strokeWidth="1.400" /></>,
  <><path d="M0.500 2.500h23v18h-23zM2 18h20" stroke={G} strokeWidth="1.400" /><path d="M3.500 14l4.500-8 4.500 8z" fill="#3fae55" stroke="none" /><path d="M12.500 6h8l-4 7z" fill="#e23b3b" stroke="none" /></>,
  <><path d="M12 22H1V2h22v9M1 5h22" stroke={G} strokeWidth="1.300" /><path {...Dk} d="M5 9h4v4H5zM5 15h4v4H5z" /><Funnel y={12} /></>,
  <><path d="M1 1h22v22H1zM1 5h22M1 11h22M1 17h22M8 5v18M15.500 5v18" stroke={G} strokeWidth="1.300" /></>,
  <><path d="M16 5h7v18H1v-6h15z" fill={BLUE} stroke="none" /><path d="M1 1h22v22H1zM1 5h22M1 11h22M1 17h22M8 5v18M15.500 5v18" stroke="#a9c4da" strokeWidth="1.200" /></>,
  <text x="4" y="18" fontSize="19" fill="#3f9ee8" stroke="#3f9ee8" strokeWidth=".3">R</text>,
  <text x="0" y="17" fontSize="19" fill="#3f9ee8" stroke="#3f9ee8" strokeWidth=".3">Py</text>,
  <><Axes /><path d="M1 4h14" stroke="#3f9ee8" /><circle cx="18" cy="4" r="2.800" fill={BLUE} stroke="#6cb2ee" /><path d="M1 10h12M1 16h7" stroke="#999" /><circle cx="14" cy="10" r="1.300" fill="#aaa" /><circle cx="9" cy="16" r="1.300" fill="#aaa" /></>,
  <><path d="M8 11.500h7M11 3.500v17M11 3.500h4M11 20h4" stroke={G} /><path {...B} d="M1 9h8v5H1zM15 1h8v5h-8zM15 9h8v5h-8zM15 17h8v5h-8z" /></>,
  <><path d="M1 3h22v15H9l-5 4v-4H1z" stroke="#5fa8dc" strokeWidth="1.400" /></>,
  <><path d="M4 6V1h10l6 6v15H4V12M14 1v6h6" stroke="#d8d8d8" strokeWidth="1.300" /><circle cx="4.500" cy="9" r="2" fill={BLUE} stroke="#6cb2ee" /><path d="M9 11h8M7 15h8" stroke="#3f9ee8" strokeWidth="1.400" /></>,
  <><path d="M6 1h12v8c0 4-3 7-6 7s-6-3-6-7zM6 3H1c0 6 2 8 5 8M18 3h5c0 6-2 8-5 8M12 16v4" stroke={G} strokeWidth="1.400" /><path {...B} d="M6 0.500h12v3H6zM8 19h8l1 3.500H7z" /></>,
  <><path d="M3 0h11l6 6v18H3zM14 0v6h6" stroke="#d8d8d8" strokeWidth="1.500" /><path d="M6 14h3v8H6zM10.500 17h3v5h-3zM15 11h3v11h-3z" fill="#d8d8d8" stroke="none" /></>,
  <><path d="M10 3.500h13.500v17H1V14" stroke={G} strokeWidth="1.500" /><text x="13.500" y="16" fontSize="11" textAnchor="middle" fill="#3f9ee8" stroke="none">123</text><path d="M3 18h18" stroke="#999" /><Bolt /></>,
  <><path {...Wt} d="M13 1h9v9h-9zM1 14h10v8H1z" /><path {...B} d="M6 5h5v6H4z" /><Funnel /><Bolt /></>,
  <><path d="M11 1h12v9l-3 3-2-2-3 3 2 3-3 6H2V13l4-2 5-3 3 3 1-5h-4z" {...B} /><path d="M4 14C0 8-1 6 1 2c2-3 6-2 7 1 0 4-2 7-4 11z" fill="#e87400" stroke="none" /><circle cx="4" cy="5" r="2" fill="#141414" stroke="none" /><circle cx="20.500" cy="20.500" r="3.200" fill="#e87400" stroke="none" /><circle cx="23" cy="14" r="1.800" fill="#e87400" stroke="none" /></>,
  <><path d="M9 2h6l8.500 10L15 22H9L0.500 12zM9 2l8 10-5 5-6-6 6-5M12 17l3 5M9 22l-2-2 5-5" stroke="#8e3a96" strokeWidth="1.400" /></>,
  <><path d="M1 2h14l8.500 10L15 22H1l7-10zM1 7M15 2l-2 4-9 13M18 6L8 22M8 2l4 6" stroke="#1f7fe0" strokeWidth="1.400" /></>,
];

const DoubleChevron = () => (
  <Svg w={10} h={11}>
    <path d="M1 1l3.500 4.500L1 10M5 1l3.500 4.500L5 10" stroke="#f0f0f0" strokeWidth="1.700" />
  </Svg>
);

function Visualizations() {
  return (
    <div className="flex w-[226px] flex-col border-l border-[#6a6a6a] text-white">
      <div className="flex h-[50px] items-center justify-between pr-[13px] pl-2.5">
        <span className="mt-px text-[18.600px] font-semibold tracking-[-0.1px]">Visualizations</span>
        <DoubleChevron />
      </div>
      <div className="pl-2.5 text-[14.200px] leading-4 font-semibold tracking-[-0.2px]">Build visual</div>
      <div className="mt-1.5 flex pl-2.5">
        <div className="flex size-10 items-center justify-center rounded-sm bg-[#292929]">
          <Svg w={30} h={32}>
            <path d="M0 2h24" stroke="#b8b8b8" strokeWidth="1.500" />
            <path d="M1 8h28v9H1zM1 21.500h28v9H1z" fill="#2aac94" stroke="#e0e0e0" strokeWidth="1.500" strokeDasharray="2 1.500" />
          </Svg>
        </div>
        <Svg w={31} h={32} className="mt-[5px] ml-12">
          <path d="M5 29H1V1h14l6 7v3" stroke="#c0c0c0" strokeWidth="1.500" />
          <path d="M14 1v9h8z" fill="#f4f4f4" stroke="none" />
          <path d="M29 12c-5 2-11 8-12 12l2.500 2C23 24 29 17 30 12zM17 24c-5-1-3 4-8 4 4 2 10 1 10.500-2" stroke="#c0c0c0" strokeWidth="1.500" />
        </Svg>
      </div>
      <svg width="225" height="16" viewBox="0 0 225 16" fill="none" stroke="#6e6e6e" strokeWidth="1" className="block">
        <path d="M0 15.500h20.500L30 6l9.500 9.500H225" />
      </svg>
      <div className="mt-3 grid grid-cols-[repeat(6,35px)] gap-y-[11px] pl-[13px]">
        {gallery.map((g, i) => (
          <Svg key={i} w={24} className="overflow-visible">{g}</Svg>
        ))}
        <div className="flex h-[22px] items-center gap-[3px] pl-[5px]">
          <span className="size-[3px] rounded-full bg-white" />
          <span className="size-[3px] rounded-full bg-white" />
          <span className="size-[3px] rounded-full bg-white" />
        </div>
      </div>
      <div className="mt-[13px] h-px bg-[#e4e4e4]" />
      <div className="flex flex-col text-[14.100px]">
        <div className="mt-3 pl-[15px] text-[13.900px] leading-5">Values</div>
        <div className="mt-[6px] mr-[7px] ml-[5px] flex h-[35px] items-center border border-dashed border-[#777] pl-[13px]">
          Add data fields here
        </div>
        <div className="mt-[13px] pl-[15px] leading-5 font-semibold">Drill through</div>
        <div className="mt-3 flex h-5 items-center justify-between pr-[27px] pl-[15px]">
          Cross-report
          <div className="flex h-5 w-10 items-center rounded-full border border-[#c4c4c4] pl-[5px] text-[10.500px] text-[#b4b4b4]">
            <span className="mr-0.5 size-2.5 rounded-full bg-[#b0b0b0]" />
            Off
          </div>
        </div>
        <div className="mt-[14px] flex h-5 items-center justify-between pr-[27px] pl-[15px]">
          <span className="-mt-0.5">Keep all filters</span>
          <div className="flex h-5 w-10 items-center rounded-full bg-[#2aac94] pl-[5px] text-[10.500px] text-[#252423]">
            On
            <span className="ml-1 size-2.5 rounded-full bg-[#252423]" />
          </div>
        </div>
        <div className="mt-3 mr-[7px] ml-[5px] flex h-8 items-center border border-dashed border-[#777] bg-black pl-2.5 whitespace-nowrap">
          Add drill-through fields here
        </div>
      </div>
    </div>
  );
}

const fields = [
  ["Age", true],
  ["Category", false],
  ["Customer Name", false],
  ["Email", false],
  ["Gender", false],
  ["Location", false],
  ["Order Value ($)", true],
  ["Purchases Per ...", true],
  ["Rating", true],
  ["Sentiment", false],
];

function DataPane() {
  return (
    <div className="flex w-[226px] flex-col border-l border-[#6a6a6a] text-white">
      <div className="flex h-[50px] items-center justify-between pr-[13px] pl-2.5">
        <span className="mt-px text-[18.400px] font-semibold">Data</span>
        <DoubleChevron />
      </div>
      <div className="mx-[5px] mt-[7px] flex h-[30px] items-center rounded border border-[#777] bg-[#242424] pl-[14px] text-[16.400px] text-[#9a9a9a]">
        <Svg w={19} className="mr-2">
          <circle cx="7.500" cy="7.500" r="6.500" stroke="#a8a8a8" strokeWidth="1.400" />
          <path d="M12.500 12.500L18 18" stroke="#a8a8a8" strokeWidth="1.400" />
        </Svg>
        Search
      </div>
      <div className="mt-[11px] flex h-[30px] items-center pl-[18px] text-[13.900px]">
        <Svg w={12} h={8}>
          <path d="M1 1l5 5 5-5" stroke="#e0e0e0" strokeWidth="1.400" />
        </Svg>
        <Svg w={16} className="mx-[6px]">
          <rect x=".8" y=".8" width="14.400" height="14.400" rx="2.500" stroke="#e0e0e0" />
          <path d="M1 5.500h14M1 10.500h14M5.500 1v14M10.500 1v14" stroke="#e0e0e0" strokeWidth="1.200" />
        </Svg>
        Sheet1
      </div>
      {fields.map(([name, sum]) => (
        <div key={name} className="flex h-[30px] items-center pl-[55px] text-[13.900px]">
          <span className="size-[15px] rounded-[2px] border border-[#c4c4c4]" />
          <span className="ml-[11px] w-[21px]">
            {sum && (
              <Svg w={14} h={16}>
                <path d="M13 3V1H1l6.500 7L1 15h12v-2" stroke="#e6e6e6" strokeWidth="1.400" />
              </Svg>
            )}
          </span>
          <span className="whitespace-nowrap">{name}</span>
        </div>
      ))}
    </div>
  );
}

/* ---------- status bar and taskbar ---------- */

function StatusBar() {
  return (
    <div className="flex h-[29px] items-center justify-between border-t border-[#666] bg-[#141414] text-[14.100px] text-[#dcdcdc]">
      <span className="mt-[3px] pl-[5px]">Page 1 of 1</span>
      <div className="mb-px flex items-center">
        <span className="h-0.5 w-1.5 bg-[#dcdcdc]" />
        <Svg w={126} h={14} className="ml-[5px]">
          <path d="M0 7.500h126M62.500 4v7" stroke="#dcdcdc" strokeWidth="1" />
          <path d="M64 1h5v13h-5z" fill="#dcdcdc" stroke="none" />
        </Svg>
        <Svg w={10} className="ml-[6px]">
          <path d="M5 0v10M0 5h10" stroke="#dcdcdc" strokeWidth="2" />
        </Svg>
        <span className="ml-[17px] w-[53px]">120%</span>
        <Svg w={18} h={14} className="mr-[23px]">
          <rect x="1" y="1" width="16" height="11.500" rx="1.500" stroke="#dcdcdc" />
          <path d="M3.500 5.500V3.500h2M12.500 3.500h2v2M14.500 8v2h-2M5.500 10h-2V8" stroke="#dcdcdc" />
        </Svg>
      </div>
    </div>
  );
}

const TaskIcon = ({ children, running }) => (
  <div className="flex h-[59px] w-[55px] flex-col items-center pt-[14px]">
    <Svg w={30} className="overflow-visible">{children}</Svg>
    {running && <div className="mt-[5px] h-1 w-2 rounded-full bg-[#9a9a9a]" />}
  </div>
);

function Taskbar() {
  return (
    <div className="flex flex-col">
      <div className="flex h-px">
        <div className="w-[944px] bg-black" />
        <div className="flex-1 bg-white" />
      </div>
      <div className="flex h-[60px] justify-between border-t border-[#444] bg-[#1c1c1c]">
        <div className="w-[821px]" />
        <div className="flex">
          <TaskIcon>
            <defs>
              <linearGradient id="win" x1="0" y1="0" x2="1" y2="1">
                <stop offset="0" stopColor="#8fe0fc" />
                <stop offset="1" stopColor="#0a94f8" />
              </linearGradient>
            </defs>
            <path d="M1 1h14v14H1zM16 1h14v14H16zM1 16h14v14H1zM16 16h14v14H16z" fill="url(#win)" stroke="none" />
          </TaskIcon>
          <div className="ml-0.5 flex">
            <TaskIcon running>
              <path d="M0 4c0-1 1-2 2-2h8l3 3h15v9H0z" fill="#dd9a08" stroke="none" />
              <path d="M0 7h11l3-2h16v21c0 1-1 2-2 2H0z" fill="#fcc934" stroke="none" />
              <path d="M5 28v-5c0-2 1-3 3-3h14c2 0 3 1 3 3v5z" fill="#1479d0" stroke="none" />
              <path d="M9 24h12" stroke="#0a4c8c" strokeWidth="1.500" />
            </TaskIcon>
            <TaskIcon running>
              <path d="M15 15L2 7.500A15 15 0 0 1 28 7.500H15z" fill="#e33b2e" stroke="none" />
              <path d="M15 15l0-7.500h13A15 15 0 0 1 15 30z" fill="#fcc62e" stroke="none" />
              <path d="M15 15l6.500 4L15 30A15 15 0 0 1 2 7.500z" fill="#2c9e4b" stroke="none" />
              <circle cx="15" cy="15" r="7" fill="#fff" stroke="none" />
              <circle cx="15" cy="15" r="5.500" fill="#2e7de9" stroke="none" />
              <circle cx="26" cy="4.500" r="10" fill="#15100e" stroke="none" />
              <rect x="20" y="-5" width="13" height="19" rx="5" fill="#d9cdb8" stroke="none" />
              <path d="M20 9c4-3 9-3 13 0v1c-1 3-4 4-6.500 4S21 13 20 10z" fill="#b9854f" stroke="none" />
              <path d="M26.500-4v6" stroke="#d8385e" strokeWidth="2.500" />
              <path d="M22 6l4-5 5 5z" fill="#6d8584" stroke="none" />
            </TaskIcon>
            <TaskIcon running>
              <path d="M17 0h10v30H17z" fill="#d38d10" stroke="none" />
              <path d="M10 7h11v23H10z" fill="#ecb823" stroke="none" />
              <path d="M4 15h10.500v15H4z" fill="#fae06a" stroke="none" />
            </TaskIcon>
            <TaskIcon running>
              <defs>
                <linearGradient id="edge" x1="0" y1="0" x2="1" y2=".4">
                  <stop offset="0" stopColor="#1d8fd8" />
                  <stop offset=".5" stopColor="#2fc1d6" />
                  <stop offset="1" stopColor="#5fe05c" />
                </linearGradient>
              </defs>
              <circle cx="15" cy="15" r="15" fill="#0c74cf" stroke="none" />
              <path d="M0 13C2 4 9 0 15 0c9 0 15 6 15 13 0 5-4 7-8 7-3 0-4-1-4-2 1-1 1-2 1-3 0-3-3-5-7-5-6 0-10 2-12 3z" fill="url(#edge)" stroke="none" />
              <path d="M11 15c-2 8 5 12 17 8-3 5-8 7-13 7-7-1-10-10-4-15z" fill="#0e4d99" stroke="none" />
              <path d="M18 18c1-1 1-2 1-3 0-2-2-3-4-3-3 2-4 6-1 9 3 3 9 3 14 1 1-1-1-2-2-2-4 1-8 0-8-2z" fill="#1c1c1c" stroke="none" />
            </TaskIcon>
          </div>
        </div>
        <div className="flex w-[822px] items-center justify-end pr-6 text-[13.900px] leading-5 text-white">
          <Svg w={14} h={9} className="mr-[26px]">
            <path d="M1 8l6-6 6 6" stroke="#f0f0f0" strokeWidth="1.700" />
          </Svg>
          <div className="mr-[22px] w-[30px] text-center">ENG<br />IN</div>
          <Svg w={21} h={21}>
            <path d="M14 1.500H3C2 1.500 1 2.500 1 3.500v10c0 1 1 2 2 2h12M5 19.500h11M8 16v3M12 16v3" stroke="#f0f0f0" strokeWidth="1.500" />
            <path d="M15 1h5v5c0 1-1 2-2.500 2S15 7 15 6zM17.500 8v12" stroke="#f0f0f0" strokeWidth="1.500" />
          </Svg>
          <Svg w={20} h={16} className="ml-[9px]">
            <path d="M1 5.500h3L8.500 1.500v13L4 10.500H1zM12 5l6.500 6.500M18.500 5L12 11.500" stroke="#f0f0f0" strokeWidth="1.400" />
          </Svg>
          <Svg w={21} h={18} className="mb-1 ml-2.5">
            <path d="M10 4.500h6c1.500 0 2.500 1 2.500 2.500v6c0 1.500-1 2.500-2.500 2.500H5M19 8.500v3h2v-3z" stroke="#f0f0f0" strokeWidth="1.500" />
            <path d="M9 0c1 5 1 12-4 13-3 0-4-2-4-4 0-4 6-4 8-9zM2 15l5-8" fill="#f0f0f0" stroke="#f0f0f0" strokeWidth=".8" />
          </Svg>
          <div className="flex w-[97px] flex-col items-end">
            <span>09:43</span>
            <span className="text-[14.200px] tracking-[0.400px]">08-07-2025</span>
          </div>
        </div>
      </div>
    </div>
  );
}

export default function App() {
  return (
    <div className="flex h-[1080px] w-[1920px] flex-col overflow-hidden bg-[#141414] font-['Noto_Sans',sans-serif]">
      <Header />
      <Ribbon />
      <div className="flex h-[777px]">
        <Rail />
        <div className="flex w-[1417px] flex-col">
          <Canvas />
          <PageTabs />
        </div>
        <Visualizations />
        <DataPane />
      </div>
      <StatusBar />
      <Taskbar />
    </div>
  );
}
